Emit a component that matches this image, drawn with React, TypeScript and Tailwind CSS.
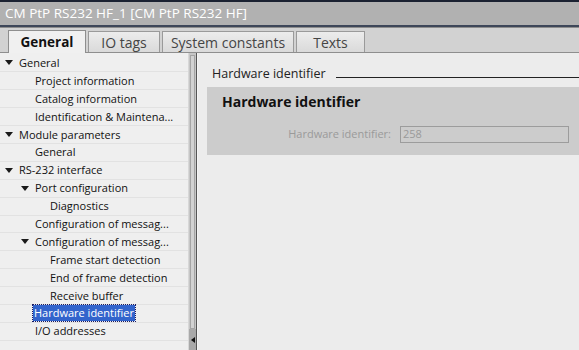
import React from "react";

type Row = { label: string; level: number; arrow?: boolean; selected?: boolean };

const rows: Row[] = [
  { label: "General", level: 0, arrow: true },
  { label: "Project information", level: 1 },
  { label: "Catalog information", level: 1 },
  { label: "Identification & Maintena...", level: 1 },
  { label: "Module parameters", level: 0, arrow: true },
  { label: "General", level: 1 },
  { label: "RS-232 interface", level: 0, arrow: true },
  { label: "Port configuration", level: 1, arrow: true },
  { label: "Diagnostics", level: 2 },
  { label: "Configuration of messag...", level: 1 },
  { label: "Configuration of messag...", level: 1, arrow: true },
  { label: "Frame start detection", level: 2 },
  { label: "End of frame detection", level: 2 },
  { label: "Receive buffer", level: 2 },
  { label: "Hardware identifier", level: 1, selected: true },
  { label: "I/O addresses", level: 1 },
];

const tabs = [
  { label: "General", w: "w-[78px]" },
  { label: "IO tags", w: "w-[72px]" },
  { label: "System constants", w: "w-[132px]" },
  { label: "Texts", w: "w-[69px]" },
];

function Arrow() {
  return (
    <svg width="8" height="5" viewBox="0 0 8 5" className="shrink-0">
      <path d="M0 0 L8 0 L4 5 Z" fill="#1a1a1a" />
    </svg>
  );
}

function TreeRow({ row }: { row: Row }) {
  const indent = ["pl-[5px]", "pl-[21px]", "pl-[36px]"][row.level];
  return (
    <div className={`flex h-[17.9px] items-center border-b border-[#e2e2e2] ${indent}`}>
      <div className="flex w-[14px] items-center">{row.arrow && <Arrow />}</div>
      <span
        className={
          row.selected
            ? "-ml-[2px] bg-[#3264cc] px-[1px] leading-[16px] text-white outline outline-1 outline-dotted outline-[#1a1a60]"
            : "leading-[16px] text-[#111]"
        }
      >
        {row.label}
      </span>
    </div>
  );
}

export default function App() {
  return (
    <div
      className="flex h-[350px] w-[579px] flex-col overflow-hidden bg-[#ececec] text-[11px]"
      style={{ fontFamily: '"Open Sans", "Noto Sans", sans-serif' }}
    >
      {/* title */}
      <div className="h-[2px] bg-[#1b2232]" />
      <div className="flex h-[23px] items-center bg-[#b1b1b1] pl-[5px] text-[13.5px] text-white">
        CM PtP RS232 HF_1 [CM PtP RS232 HF]
      </div>
      <div className="h-[2px] bg-[#3e4759]" />
      <div className="h-[1px] bg-[#8d8d8d]" />

      {/* tabs */}
      <div className="flex h-[25px] items-end gap-[2px] border-b border-[#8e8e8e] bg-[#d2d2d2] pl-[8px]">
        {tabs.map((t, i) =>
          i === 0 ? (
            <div
              key={t.label}
              className={`-mb-px flex h-[23px] items-center justify-center border border-b-0 border-[#8e8e8e] bg-[#f0f0f0] text-[13.5px] font-bold text-[#111] ${t.w}`}
            >
              {t.label}
            </div>
          ) : (
            <div
              key={t.label}
              className={`flex h-[21px] items-center justify-center border border-b-0 border-[#9a9a9a] bg-gradient-to-b from-[#ececec] to-[#dadada] text-[14px] text-[#454545] ${t.w}`}
            >
              {t.label}
            </div>
          )
        )}
      </div>

      <div className="flex min-h-0 flex-1">
        {/* tree */}
        <div className="w-[188px] shrink-0 bg-[#efefef] pt-[1.5px]">
          {rows.map((r, i) => (
            <TreeRow key={i} row={r} />
          ))}
        </div>

        {/* splitter / scroll */}
        <div className="flex w-[8px] shrink-0 flex-col border-l border-[#d8d8d8] bg-[#c6c6c6]">
          <div className="mx-[1px] mt-[2px] flex-1 border border-[#a4a4a4] bg-[#d2d2d2]" />
          <div className="flex h-[21px] items-center justify-center bg-[#a9a9a9]">
            <svg width="4" height="6" viewBox="0 0 4 6">
              <path d="M4 0 L0 3 L4 6 Z" fill="#111" />
            </svg>
          </div>
        </div>
        <div className="w-[1px] shrink-0 bg-[#555]" />
        <div className="w-[1px] shrink-0 bg-[#f4f4f4]" />

        {/* content */}
        <div className="flex min-w-0 flex-1 flex-col pl-[9px] pt-[12px]">
          <div className="flex items-center gap-[10px] pl-[5px]">
            <span className="text-[12.5px] text-[#222]">Hardware identifier</span>
            <div className="mt-[7px] h-[1px] flex-1 bg-[#222]" />
          </div>
          <div className="mt-[3px] h-[68px] bg-[#cccccc] pl-[15px] pt-[4px]">
            <div className="text-[14px] font-bold text-[#111]">Hardware identifier</div>
            <div className="mt-[14px] flex items-center">
              <span className="w-[178px] pr-[9px] text-right text-[#9a9a9a]">Hardware identifier:</span>
              <div className="flex h-[17px] w-[169px] items-center border border-[#9c9c9c] pl-[2px] text-[#9a9a9a]">
                258
              </div>
            </div>
          </div>
        </div>
      </div>
    </div>
  );
}
